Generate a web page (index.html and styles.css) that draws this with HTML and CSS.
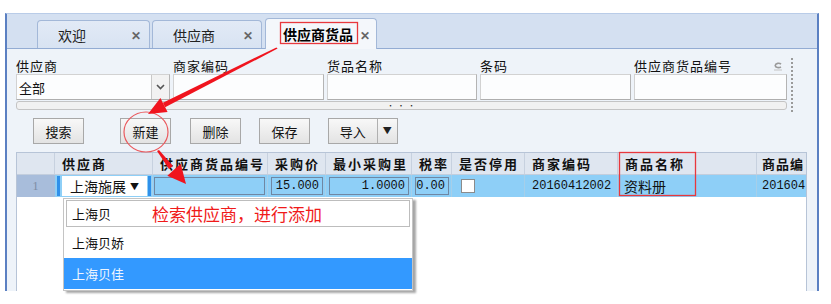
FILE: index.html
```html
<!DOCTYPE html>
<html lang="zh-CN">
<head>
  <meta charset="UTF-8">
  <title>供应商货品</title>
  <link rel="stylesheet" href="styles.css">
</head>
<body>
  <div class="window">
    <div class="tabbar">
      <div class="tab tab-1"><span>欢迎</span><span class="tab-close">✕</span></div>
      <div class="tab tab-2"><span>供应商</span><span class="tab-close">✕</span></div>
      <div class="tab active"><span>供应商货品</span><span class="tab-close">✕</span></div>
    </div>

    <div class="panel">
      <div class="filters">
        <div class="fields">
          <div class="field f1">
            <label>供应商</label>
            <div class="input combo">
              <span class="combo-text">全部</span>
              <span class="combo-btn">
                <svg width="9" height="6" viewBox="0 0 9 6"><polyline points="1,1 4.5,4.5 8,1" fill="none" stroke="#555" stroke-width="1.6"/></svg>
              </span>
            </div>
          </div>
          <div class="field f2">
            <label>商家编码</label>
            <div class="input"></div>
          </div>
          <div class="field f3">
            <label>货品名称</label>
            <div class="input"></div>
          </div>
          <div class="field f4">
            <label>条码</label>
            <div class="input"></div>
          </div>
          <div class="field f5">
            <label class="label-row">供应商货品编号
              <svg class="reset-icon" width="10" height="9" viewBox="0 0 10 9"><path d="M8 2.2 C6.5 0.8 2.5 1 2.2 3.6 C2.5 5.8 6 6 8 5" fill="none" stroke="#9a9a9a" stroke-width="1.6"/><line x1="1" y1="8" x2="9" y2="8" stroke="#c4c4c4" stroke-width="1"/></svg>
            </label>
            <div class="input"></div>
          </div>
        </div>
        <div class="hscroll"><span class="dots">• • •</span></div>
      </div>

      <div class="toolbar">
        <div class="btn">搜索</div>
        <div class="btn btn-new">新建</div>
        <div class="btn btn-gap">删除</div>
        <div class="btn btn-gap">保存</div>
        <div class="btn btn-gap btn-split">
          <span class="split-main">导入</span>
          <span class="split-arrow">▼</span>
        </div>
      </div>

      <div class="grid">
        <div class="grid-row grid-head">
          <div class="cell rownum"></div>
          <div class="cell">供应商</div>
          <div class="cell">供应商货品编号</div>
          <div class="cell">采购价</div>
          <div class="cell">最小采购里</div>
          <div class="cell">税率</div>
          <div class="cell">是否停用</div>
          <div class="cell">商家编码</div>
          <div class="cell">商品名称</div>
          <div class="cell">商品编</div>
        </div>
        <div class="grid-row grid-data">
          <div class="cell rownum">1</div>
          <div class="cell cell-edit">
            <div class="edit-combo">
              <span>上海施展</span>
              <span class="edit-arrow">▼</span>
            </div>
          </div>
          <div class="cell cell-input"><div class="edit-box"></div></div>
          <div class="cell cell-input"><div class="edit-box num">15.000</div></div>
          <div class="cell cell-input"><div class="edit-box num">1.0000</div></div>
          <div class="cell cell-input"><div class="edit-box num">0.00</div></div>
          <div class="cell cell-check"><span class="checkbox"></span></div>
          <div class="cell mono">20160412002</div>
          <div class="cell name">资料册</div>
          <div class="cell mono last">201604</div>
        </div>
      </div>
    </div>
  </div>

  <div class="dropdown">
    <div class="dd-search">
      <span>上海贝</span>
      <span class="dd-hint">检索供应商，进行添加</span>
    </div>
    <div class="dd-item">上海贝娇</div>
    <div class="dd-item selected">上海贝佳</div>
  </div>

  <svg class="marks" width="831" height="304" viewBox="0 0 831 304">
    <rect x="280.5" y="22.5" width="77" height="21" fill="none" stroke="#e8383d" stroke-width="1.3"/>
    <rect x="619.5" y="152.5" width="76" height="43" fill="none" stroke="#e8383d" stroke-width="1.3"/>
    <ellipse cx="146" cy="132" rx="22" ry="20" fill="none" stroke="#ea5a5e" stroke-width="1.2"/>
    <polygon points="277.6,48.6 276.4,47.4 162.9,102.8 165.1,107.2" fill="#f0141e"/>
    <polygon points="148,114 160.4,97.9 167.6,112.1" fill="#f0141e"/>
    <polygon points="157,151 159,150 173,166 169,169" fill="#f0141e"/>
    <polygon points="186,184 167.3,175.7 180.7,163.7" fill="#f0141e"/>
  </svg>
</body>
</html>
```

FILE: styles.css
```css
body {
  margin: 0;
  background: #fff;
  font-family: "Noto Sans CJK SC", "Noto Sans", sans-serif;
  font-size: 13px;
  color: #111;
  position: relative;
  width: 831px;
  height: 304px;
  overflow: hidden;
}

.window {
  margin: 13px 0 0 5px;
  width: 810px;
  height: 277px;
  border-left: 2px solid #5b80c2;
  border-right: 2px solid #5b80c2;
  border-top: 1px solid #b9cce8;
  display: flex;
  flex-direction: column;
  overflow: hidden;
}

/* tabs */
.tabbar {
  height: 34px;
  flex: none;
  border-bottom: 1px solid #93acd3;
  background: #d4e0f1;
  display: flex;
  align-items: flex-end;
  padding-left: 30px;
}

.tab {
  height: 28px;
  box-sizing: border-box;
  border: 1px solid #a3b8d8;
  border-bottom: none;
  border-radius: 4px 4px 0 0;
  background: linear-gradient(#e2eaf6, #d8e3f2);
  display: flex;
  align-items: center;
  justify-content: space-between;
  padding: 0 8px 0 20px;
  font-size: 14px;
  color: #222;
}

.tab-1 { width: 113px; }
.tab-2 { width: 110px; margin-left: 2px; }

.tab.active {
  width: 112px;
  height: 31px;
  margin-left: 3px;
  margin-bottom: -1px;
  background: #f4f7fb;
  font-weight: bold;
  padding-left: 17px;
  padding-right: 6px;
  color: #000;
}

.tab-close {
  font-size: 12px;
  font-weight: bold;
  color: #666;
}

/* panel */
.panel {
  flex: 1;
  background: #eef3f9;
  padding: 9px 10px 0 9px;
  display: flex;
  flex-direction: column;
  min-height: 0;
}

.filters {
  width: 777px;
  box-sizing: border-box;
  border-right: 2px dotted #9a9a9a;
  padding-right: 4px;
  padding-bottom: 2px;
}

.fields {
  display: flex;
  gap: 3px;
}

.f1 { width: 154px; }
.f2 { width: 151px; }
.f3 { width: 150px; }
.f4 { width: 151px; }
.f5 { width: 153px; }

.field label {
  display: block;
  height: 16px;
  line-height: 16px;
  font-size: 13px;
  letter-spacing: 1px;
  color: #111;
}

.label-row {
  display: flex !important;
  justify-content: space-between;
  align-items: center;
  padding-right: 4px;
}

.input {
  height: 26px;
  box-sizing: border-box;
  border: 1px solid;
  border-color: #d2d2d2 #b4b4b4 #aeaeae #d2d2d2;
  background: #fcfdfe;
}

.combo {
  display: flex;
  align-items: center;
  justify-content: space-between;
}

.combo-text {
  padding-left: 2px;
  font-size: 13px;
}

.combo-btn {
  width: 17px;
  height: 24px;
  border-left: 1px solid #c8c8c8;
  background: #f2f2f2;
  display: flex;
  align-items: center;
  justify-content: center;
}

.hscroll {
  margin-top: 1px;
  height: 7px;
  border: 1px solid #c4c4c4;
  border-radius: 3px;
  background: #f1f1f1;
  text-align: center;
}

.dots {
  display: block;
  font-size: 7px;
  line-height: 6px;
  letter-spacing: 1px;
  color: #222;
}

/* toolbar */
.toolbar {
  margin-top: 6px;
  display: flex;
  padding-left: 17px;
  flex: none;
}

.btn {
  width: 51px;
  height: 26px;
  box-sizing: border-box;
  border: 1px solid #a8a8a8;
  background: linear-gradient(#f8f8f8, #e3e3e3);
  display: flex;
  align-items: center;
  justify-content: center;
  font-size: 13px;
  color: #111;
}

.btn-new { margin-left: 36px; }
.btn-gap { margin-left: 18px; }
.btn-new + .btn-gap { margin-left: 19px; }

.btn-split {
  width: 70px;
  justify-content: flex-start;
}

.split-main {
  width: 49px;
  text-align: center;
}

.split-arrow {
  width: 20px;
  height: 24px;
  line-height: 24px;
  border-left: 1px solid #b0b0b0;
  text-align: center;
  font-size: 9px;
  color: #222;
}

/* grid */
.grid {
  margin-top: 8px;
  flex: 1;
  width: 791px;
  box-sizing: border-box;
  border: 1px solid #b7c4d7;
  border-bottom: none;
  background: #fff;
}

.grid-row {
  display: grid;
  grid-template-columns: 38px 98px 115px 58px 86px 40px 73px 93px 139px 49px;
}

.cell {
  box-sizing: border-box;
  border-right: 1px solid #c7d1df;
  white-space: nowrap;
  overflow: hidden;
}

.grid-head {
  height: 22px;
  background: #dfe6f0;
  border-bottom: 1px solid #c3cedd;
  box-sizing: border-box;
}

.grid-head .cell {
  line-height: 21px;
  font-weight: bold;
  letter-spacing: 2px;
  padding-left: 7px;
}

.grid-head .cell:last-child {
  letter-spacing: 1px;
  padding-left: 5px;
  border-right: none;
}

.grid-data {
  height: 22px;
  background: #8ecff7;
}

.grid-data .cell {
  border-right-color: #a6cfe9;
  display: flex;
  align-items: center;
}

.grid-data .rownum {
  background: #a8bddb;
  justify-content: center;
  color: #7d8ca4;
  font-family: "Liberation Serif", serif;
  font-size: 12px;
  border-right-color: #a8bddb;
}

.cell-edit {
  padding: 1px 1px 1px 2px;
}

.edit-combo {
  height: 100%;
  flex: 1;
  box-sizing: border-box;
  background: #fff;
  border-left: 3px solid #2f90ea;
  border-right: 3px solid #2f90ea;
  box-shadow: inset 2px 0 0 #8ecff7, inset -1px 0 0 #8ecff7;
  display: flex;
  justify-content: space-between;
  align-items: center;
  padding: 0 9px 0 10px;
  font-size: 14px;
}

.edit-arrow {
  font-size: 9px;
}

.grid-data .cell-input {
  padding: 2px 2px 2px 3px;
  align-items: stretch;
}

.grid-data .cell-input:nth-child(3) {
  padding-left: 1px;
}

.edit-box {
  flex: 1;
  box-sizing: border-box;
  border: 1px solid #6f87a3;
  background: #8ecff7;
  line-height: 16px;
}

.num,
.mono {
  font-family: "Liberation Mono", monospace;
  font-size: 12px;
}

.num {
  text-align: right;
  padding-right: 3px;
}

.grid-data .cell-check {
  padding-left: 9px;
}

.checkbox {
  display: block;
  width: 14px;
  height: 14px;
  box-sizing: border-box;
  background: #fff;
  border: 1px solid #8b8b8b;
}

.grid-data .mono {
  padding-left: 7px;
}

.grid-data .name {
  padding-left: 6px;
  font-size: 14px;
}

.grid-data .last {
  padding-left: 5px;
  border-right: none;
}

/* supplier dropdown */
.dropdown {
  position: absolute;
  left: 63px;
  top: 198px;
  width: 350px;
  height: 93px;
  box-sizing: border-box;
  border: 1px solid #c4c4c4;
  background: #fff;
  box-shadow: 3px 2px 2px rgba(0, 0, 0, 0.35);
  overflow: hidden;
}

.dd-search {
  margin: 1px 2px 0;
  height: 27px;
  box-sizing: border-box;
  border: 1px solid #bdbdbd;
  display: flex;
  align-items: center;
  padding-left: 5px;
  font-size: 13px;
}

.dd-hint {
  margin-left: 41px;
  color: #f01a1a;
  font-size: 17px;
}

.dd-item {
  height: 31px;
  line-height: 31px;
  padding-left: 8px;
  font-size: 13px;
}

.dd-item.selected {
  background: #3399ff;
  color: #eef5ff;
}

.marks {
  position: absolute;
  left: 0;
  top: 0;
  pointer-events: none;
}
```
